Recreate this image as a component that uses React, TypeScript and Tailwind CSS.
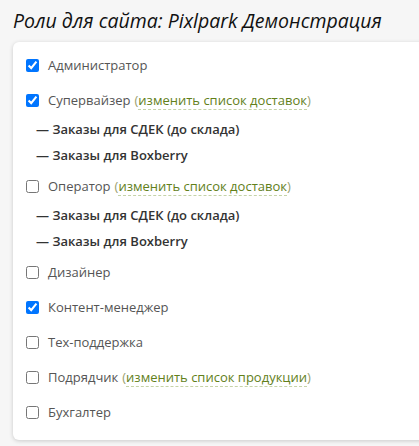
const roles = [
  { name: "Администратор", checked: true },
  { name: "Супервайзер", checked: true, link: "изменить список доставок", subs: ["Заказы для СДЕК (до склада)", "Заказы для Boxberry"] },
  { name: "Оператор", checked: false, link: "изменить список доставок", subs: ["Заказы для СДЕК (до склада)", "Заказы для Boxberry"] },
  { name: "Дизайнер", checked: false },
  { name: "Контент-менеджер", checked: true },
  { name: "Тех-поддержка", checked: false },
  { name: "Подрядчик", checked: false, link: "изменить список продукции" },
  { name: "Бухгалтер", checked: false },
];

export default function App() {
  return (
    <div className="min-h-[446px] w-[419px] overflow-hidden bg-[#f6f6f6] pl-[13px] pt-[7px] font-['Open_Sans',sans-serif]">
      <h1 className="mb-[7px] h-[28px] text-[19.5px] italic leading-[28px] text-[#111]">
        Роли для сайта: Pixlpark Демонстрация
      </h1>
      <div className="w-[430px] rounded-md bg-white pb-[10px] pl-[13px] pt-[6px] shadow-[0_1px_4px_rgba(0,0,0,0.18)]">
        {roles.map((r) => (
          <div key={r.name} className="py-[9px]">
            <label className="flex h-[17px] items-center text-[13px] leading-[17px] text-[#555]">
              <input type="checkbox" defaultChecked={r.checked} className="m-0 h-[13px] w-[13px]" />
              <span className="ml-[9px]">{r.name}</span>
              {r.link && (
                <span className="ml-[4px] text-[#9aa070]">
                  (
                  <a href="#" className="border-b border-dashed border-[#c5d3a8] text-[#62801a]">
                    {r.link}
                  </a>
                  )
                </span>
              )}
            </label>
            {r.subs && (
              <div className="mt-[8px] -mb-[9px] pl-[10px]">
                {r.subs.map((s) => (
                  <div key={s} className="flex h-[26px] items-center text-[13px] font-semibold text-[#333]">
                    — {s}
                  </div>
                ))}
              </div>
            )}
          </div>
        ))}
      </div>
    </div>
  );
}
